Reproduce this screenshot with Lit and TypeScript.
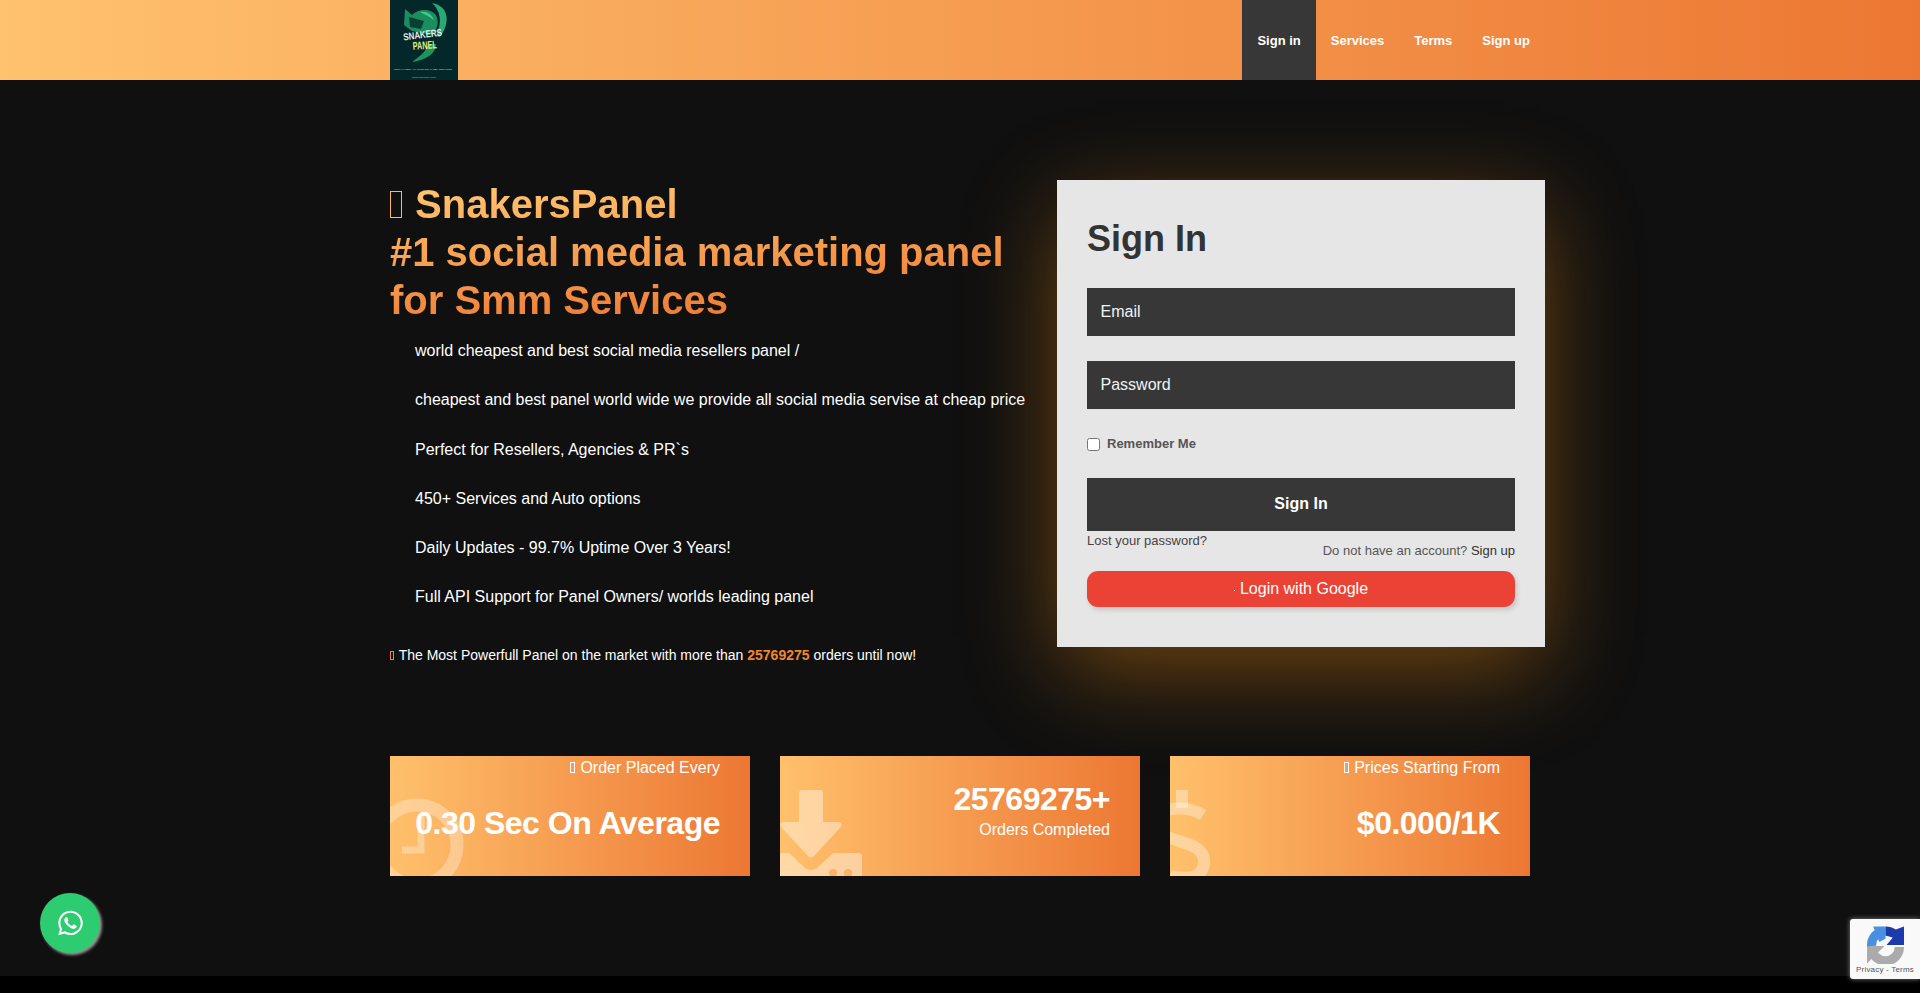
import { LitElement, html, css } from "lit";
import { customElement } from "lit/decorators.js";

const WA = "M380.9 97.1C339 55.1 283.2 32 223.9 32c-122.4 0-222 99.6-222 222 0 39.1 10.2 77.3 29.6 111L0 480l117.7-30.9c32.4 17.7 68.9 27 106.1 27h.1c122.3 0 224.1-99.6 224.1-222 0-59.3-25.2-115-67.1-157zm-157 341.6c-33.2 0-65.7-8.9-94-25.7l-6.7-4-69.8 18.3L72 359.2l-4.4-7c-18.5-29.4-28.2-63.3-28.2-98.2 0-101.7 82.8-184.5 184.6-184.5 49.3 0 95.6 19.2 130.4 54.1 34.8 34.9 56.2 81.2 56.1 130.5 0 101.8-84.9 184.6-186.6 184.6zm101.2-138.2c-5.5-2.8-32.8-16.2-37.9-18-5.1-1.9-8.8-2.8-12.5 2.8-3.7 5.6-14.3 18-17.6 21.8-3.2 3.7-6.5 4.2-12 1.4-32.6-16.3-54-29.1-75.5-66-5.7-9.8 5.7-9.1 16.3-30.3 1.8-3.7.9-6.9-.5-9.7-1.4-2.8-12.5-30.1-17.1-41.2-4.5-10.8-9.1-9.3-12.5-9.5-3.2-.2-6.9-.2-10.6-.2-3.7 0-9.7 1.4-14.8 6.9-5.1 5.6-19.4 19-19.4 46.3 0 27.3 19.9 53.7 22.6 57.4 2.8 3.7 39.1 59.7 94.8 83.8 35.2 15.2 49 16.5 66.6 13.9 10.7-1.6 32.8-13.4 37.4-26.4 4.6-13 4.6-24.1 3.2-26.4-1.3-2.5-5-3.9-10.5-6.6z";

const LIST = [
  "world cheapest and best social media resellers panel /",
  "cheapest and best panel world wide we provide all social media servise at cheap price",
  "Perfect for Resellers, Agencies & PR`s",
  "450+ Services and Auto options",
  "Daily Updates - 99.7% Uptime Over 3 Years!",
  "Full API Support for Panel Owners/ worlds leading panel",
];

@customElement("app-root")
export class AppRoot extends LitElement {
  static styles = css`
    :host { display: block; background: #101010; font-family: "Liberation Sans", Arial, sans-serif; height: 993px; overflow: hidden; position: relative; }
    * { box-sizing: border-box; }
    .wrap { width: 1170px; margin: 0 auto; padding: 0 15px; }
    .nav { height: 80px; background: linear-gradient(90deg, #ffc26f, #ec7733); }
    .nav .wrap { display: flex; justify-content: space-between; height: 80px; padding-right: 0; }
    .logo { display: block; width: 68px; height: 80px; }
    .links { display: flex; }
    .links a { padding: 0 15px; line-height: 81px; font-size: 13px; font-weight: 700; color: #fff; }
    .links a.on { background: #373737; }
    .main { height: 896px; padding-top: 100px; }
    .hero { display: flex; justify-content: space-between; align-items: flex-start; height: 576px; }
    .left { width: 640px; }
    .tf { display: inline-block; width: .3em; height: .68em; border: 1px solid currentColor; margin-right: .06em; }
    h1 { margin: 0; font-size: 40px; line-height: 48px; font-weight: 700; background: linear-gradient(176deg, #ffc26d 8%, #ec7531 92%); -webkit-background-clip: text; background-clip: text; color: transparent; }
    h1 .tf { color: #fbb967; width: 12px; border-width: 1.5px; margin-right: 2px; }
    ul { list-style: none; margin: 16px 0 0; padding: 0 0 0 25px; }
    li { font-size: 16px; line-height: 22px; color: #fff; margin-bottom: 27.3px; }
    .count { margin: 0; font-size: 14px; line-height: 20px; color: #fff; padding-top: 9.500px; }
    .count .tf { color: #f0872f; }
    .count b { color: #f0872f; }
    .card { width: 488px; height: 467px; margin-right: -15px; background: #e6e6e6; padding: 30px; box-shadow: 0 25px 90px -5px rgba(255, 150, 20, .42); }
    h2 { margin: 0; padding-top: 3px; height: 52px; font-size: 36px; line-height: 52px; font-weight: 700; color: #333; }
    .field { display: block; width: 100%; height: 48px; border: 0; background: #373737; padding: 0 13.500px; font: 16px "Liberation Sans", Arial, sans-serif; color: #fff; border-radius: 0; }
    .field::placeholder { color: #f2f2f2; opacity: 1; }
    .f1 { margin-top: 26px; }
    .f2 { margin-top: 25px; }
    .rem { display: flex; align-items: center; margin-top: 27px; height: 14px; font-size: 13px; font-weight: 700; color: #555; }
    .rem input { margin: 3px 7px 0 0; width: 13px; height: 13px; }
    .submit { display: block; width: 100%; height: 53px; margin-top: 28px; border: 0; padding: 0 0 2px; background: #373737; color: #fff; font: 700 16px "Liberation Sans", Arial, sans-serif; }
    .under { height: 40px; font-size: 13px; color: #555; }
    .under .lost { color: #444; line-height: 20px; }
    .under .acc { text-align: right; line-height: 20px; margin-top: -10px; }
    .under .acc a { color: #333; }
    .google { display: block; height: 36px; line-height: 36px; text-align: center; background: #ea4335; color: #fff; font-size: 16px; border-radius: 11px; box-shadow: 2px 3px 5px rgba(0, 0, 0, .14); }
    .dot { display: inline-block; width: 1px; height: 1px; background: #fff; margin-right: 5px; vertical-align: 3px; }
    .stats { display: flex; gap: 30px; }
    .stat { position: relative; width: 360px; height: 120px; overflow: hidden; background: linear-gradient(90deg, #ffc06c, #ec7733); color: #fff; text-align: right; padding: 0 30px 0 20px; }
    .stat svg { position: absolute; left: 0; top: 0; width: 120px; height: 120px; }
    .stat .t { position: relative; font-size: 16px; line-height: 22px; padding-top: 1px; height: 23px; }
    .stat .big { position: relative; font-size: 32px; font-weight: 700; line-height: 38px; letter-spacing: -.5px; white-space: nowrap; }
    .s1 .big { margin-top: 25px; }
    .s2 .big { padding-top: 24px; }
    .s2 .t { line-height: 20px; margin-top: 1px; }
    .foot { height: 17px; background: #000; }
    .wa { position: absolute; left: 40px; top: 893px; width: 60px; height: 60px; border-radius: 50%; background: #2ecc71; box-shadow: 2px 2px 3px #999; display: flex; align-items: center; justify-content: center; }
    .wa svg { width: 25px; height: 28px; fill: #fff; }
    .rc { position: absolute; left: 1850px; top: 919px; width: 70px; height: 60px; background: #f9f9f9; border-radius: 3px 0 0 3px; box-shadow: 0 0 5px #808080; }
    .rc svg { display: block; width: 37px; height: 38px; margin: 7px 0 0 17px; }
    .rc span { display: block; width: 70px; text-align: center; font-size: 8px; line-height: 10px; color: #555; margin-top: 1px; letter-spacing: .2px; white-space: nowrap; }
  `;

  logo() {
    return html`<svg class="logo" viewBox="0 0 68 80" role="img" aria-label="SnakersPanel">
      <rect width="68" height="80" fill="#04282a"/>
      <path d="M42 3C60 6 60 24 50 37L46 36C53 22 50 10 42 3Z" fill="#2aa874"/>
      <path d="M15 9L22 15C28 9 40 8 46 15C50 23 46 31 42 35L22 31L14 25Z" fill="#1a8e5f"/>
      <path d="M19 17L34 21L31 29L20 27Z" fill="#0b3f33"/>
      <path d="M30 12C36 11 42 14 44 20L38 16Z" fill="#48c88f"/>
      <path d="M46 44C46 54 36 60 22 62C30 56 36 52 38 44Z" fill="#1b9360"/>
      <text x="33" y="38" text-anchor="middle" transform="rotate(-7 33 38)" font-size="10" font-weight="700" fill="#e6f0ea" font-family="Liberation Sans" textLength="39" lengthAdjust="spacingAndGlyphs">SNAKERS</text>
      <text x="35" y="49" text-anchor="middle" transform="rotate(-4 35 49)" font-size="11" font-weight="700" fill="#e6ec7a" font-family="Liberation Sans" textLength="24" lengthAdjust="spacingAndGlyphs">PANEL</text>
      <text x="33" y="70" text-anchor="middle" font-size="2" fill="#c9d6d0" font-family="Liberation Sans" textLength="58" lengthAdjust="spacingAndGlyphs">SOCIAL MEDIA MARKETING PANEL SERVICES</text>
      <text x="34" y="77.500" text-anchor="middle" font-size="2" fill="#7fd08f" font-family="Liberation Sans" textLength="24" lengthAdjust="spacingAndGlyphs">snakerspanel.com</text>
    </svg>`;
  }

  render() {
    return html`
      <div class="nav"><div class="wrap">
        ${this.logo()}
        <div class="links">
          <a class="on">Sign in</a><a>Services</a><a>Terms</a><a>Sign up</a>
        </div>
      </div></div>
      <div class="main"><div class="wrap">
        <div class="hero">
          <div class="left">
            <h1><span class="tf"></span> SnakersPanel<br>#1 social media marketing panel<br>for Smm Services</h1>
            <ul>${LIST.map((t) => html`<li>${t}</li>`)}</ul>
            <p class="count"><span class="tf"></span> The Most Powerfull Panel on the market with more than <b>25769275</b> orders until now!</p>
          </div>
          <div class="card">
            <h2>Sign In</h2>
            <input class="field f1" placeholder="Email">
            <input class="field f2" placeholder="Password">
            <label class="rem"><input type="checkbox">Remember Me</label>
            <button class="submit">Sign In</button>
            <div class="under">
              <div class="lost">Lost your password?</div>
              <div class="acc">Do not have an account? <a>Sign up</a></div>
            </div>
            <a class="google"><span class="dot"></span>Login with Google</a>
          </div>
        </div>
        <div class="stats">
          <div class="stat s1">
            <svg viewBox="0 0 120 120"><g fill="none" stroke="#fff" stroke-opacity=".3"><circle cx="27" cy="89" r="40" stroke-width="13"/><path d="M31 60V94H12" stroke-width="7"/></g></svg>
            <div class="t"><span class="tf"></span> Order Placed Every</div>
            <div class="big">0.30 Sec On Average</div>
          </div>
          <div class="stat s2">
            <svg viewBox="0 0 120 120"><path fill="#fff" fill-opacity=".4" fill-rule="evenodd" d="M22 34H40Q43 34 43 37V66H59Q64 68 60 72L34 100Q31 103 28 100L2 72Q-2 68 3 66H19V37Q19 34 22 34ZM-20 97H9L25 112Q31 116 37 112L53 97H79Q82 97 82 100V120H-20ZM53 113A4 4 0 1 0 53 121A4 4 0 1 0 53 113ZM68 113A4 4 0 1 0 68 121A4 4 0 1 0 68 113Z"/></svg>
            <div class="big">25769275+</div>
            <div class="t">Orders Completed</div>
          </div>
          <div class="stat s1">
            <svg viewBox="0 0 120 120"><g fill="none" stroke="#fff" stroke-opacity=".35" stroke-width="12"><path d="M33 59C22 52 4 50 -8 56C-18 64 -14 76 0 82C16 88 36 90 34 108C32 122 18 124 0 120"/></g><rect x="6" y="34" width="12" height="18" fill="#fff" fill-opacity=".35"/></svg>
            <div class="t"><span class="tf"></span> Prices Starting From</div>
            <div class="big">$0.000/1K</div>
          </div>
        </div>
      </div></div>
      <div class="foot"></div>
      <a class="wa"><svg viewBox="0 0 448 512"><path d=${WA}/></svg></a>
      <div class="rc">
        <svg viewBox="0 0 36 36">
          <path d="M4.500 20A13.500 13.500 0 0 0 31.500 20" fill="none" stroke="#ababab" stroke-width="9"/>
          <path d="M0 19H17L10 26L0 36Z" fill="#ababab"/>
          <path d="M4.500 19A13.500 13.500 0 0 1 12 6" fill="none" stroke="#4a90e2" stroke-width="9"/>
          <path d="M6 0H18V12L12 15Z" fill="#4a90e2"/>
          <path d="M18 0C22 0 25 1 28 3L36 0V18H19L25 11C23 10 20 9 18 9Z" fill="#1c3aa9"/>
        </svg>
        <span>Privacy - Terms</span>
      </div>
    `;
  }
}
